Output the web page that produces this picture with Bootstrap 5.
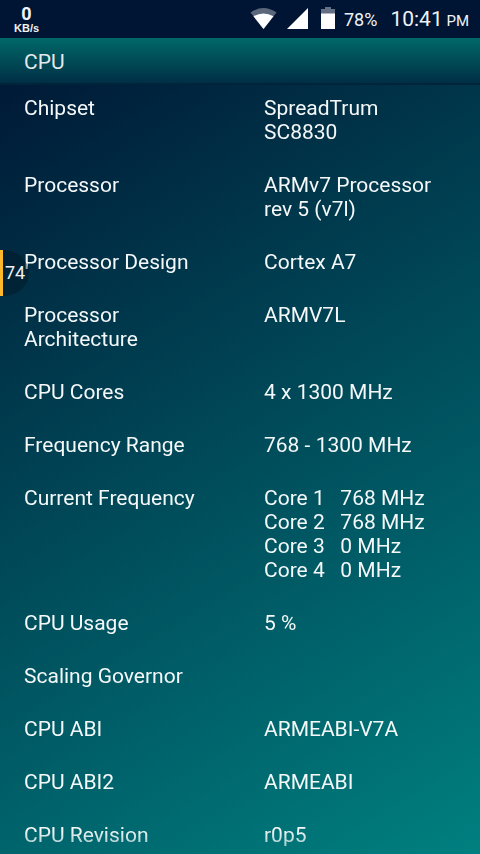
<!DOCTYPE html>
<html lang="en">
<head>
<meta charset="utf-8">
<meta name="viewport" content="width=device-width, initial-scale=1">
<title>CPU</title>
<link href="https://cdn.jsdelivr.net/npm/bootstrap@5.3.0/dist/css/bootstrap.min.css" rel="stylesheet">
<style>
body { font-family: Roboto, sans-serif; font-size: 21px; line-height: 24px; background: #001533; color: #f4f8f8; }
.status-bar { height: 38px; background: #001533; color: #f0f2f5; }
.net-speed { font-family: "Liberation Sans", sans-serif; font-weight: 700; font-size: 11px; line-height: 11px; margin-left: 14px; }
.net-value { font-family: Roboto, sans-serif; font-weight: 700; font-size: 18px; line-height: 19px; }
.battery-text { font-size: 18px; margin: 2px 13px 0 8px; }
.clock { font-size: 21px; margin-top: 2px; padding-right: 11px; }
.clock-half { font-size: 15px; }
.screen-body { background: linear-gradient(149deg, #001533, #008080); }
.title-bar { height: 47px; padding-top: 2px; background: linear-gradient(#006868, #002f45); border-bottom: 2px solid #00243a; color: #e3e9ea; font-size: 21px; line-height: 24px; }
.spec-list { padding-top: 11px; gap: 29px; -webkit-mask-image: linear-gradient(#000 calc(100% - 24px), rgba(0, 0, 0, .5)); mask-image: linear-gradient(#000 calc(100% - 24px), rgba(0, 0, 0, .5)); }
.spec-cell { padding: 0 28px 0 24px; font-weight: 400; }
.bubble { top: 250px; width: 29px; height: 46px; border-left: 3px solid #fdb82b; }
.bubble-disc { background: rgba(0, 20, 32, .4); border-radius: 0 26px 26px 0 / 0 23px 23px 0; color: #f0f2f5; font-size: 18px; padding-left: 2px; }
</style>
<script src="https://cdn.jsdelivr.net/npm/bootstrap@5.3.0/dist/js/bootstrap.bundle.min.js"></script>
</head>
<body>
<div class="d-flex flex-column vh-100 overflow-hidden position-relative">
  <header class="status-bar d-flex align-items-center flex-shrink-0">
    <div class="net-speed text-center"><div class="net-value">0</div>KB/s</div>
    <div class="d-flex align-items-center ms-auto">
      <svg width="86" height="38" viewBox="0 0 86 38" role="img" aria-label="Wi-Fi, mobile signal and battery">
        <path d="M0.500 12.500Q13.500 3.500 26.500 12.500L13.500 29Z" fill="#5c677b"/>
        <path d="M3.500 16.300Q13.500 10.500 23.500 16.300L13.500 29Z" fill="#fff"/>
        <path d="M37 29L58 8V29Z" fill="#fff"/>
        <path d="M71 9H75V7H81V9H85V14H71Z" fill="#667085"/>
        <path d="M71 13.500H85V29H71Z" fill="#fff"/>
      </svg>
      <span class="battery-text">78%</span>
      <span class="clock">10:41<span class="clock-half"> PM</span></span>
    </div>
  </header>
  <main class="screen-body d-flex flex-column flex-grow-1 overflow-hidden">
    <h1 class="title-bar d-flex align-items-center flex-shrink-0 fw-normal ps-4 mb-0">CPU</h1>
    <dl class="spec-list d-flex flex-column flex-grow-1 overflow-hidden mb-0">
      <div class="row g-0 flex-shrink-0"><dt class="spec-cell col-6">Chipset</dt><dd class="spec-cell col-6 mb-0">SpreadTrum SC8830</dd></div>
      <div class="row g-0 flex-shrink-0"><dt class="spec-cell col-6">Processor</dt><dd class="spec-cell col-6 mb-0">ARMv7 Processor rev 5 (v7l)</dd></div>
      <div class="row g-0 flex-shrink-0"><dt class="spec-cell col-6">Processor Design</dt><dd class="spec-cell col-6 mb-0">Cortex A7</dd></div>
      <div class="row g-0 flex-shrink-0"><dt class="spec-cell col-6">Processor Architecture</dt><dd class="spec-cell col-6 mb-0">ARMV7L</dd></div>
      <div class="row g-0 flex-shrink-0"><dt class="spec-cell col-6">CPU Cores</dt><dd class="spec-cell col-6 mb-0">4 x 1300 MHz</dd></div>
      <div class="row g-0 flex-shrink-0"><dt class="spec-cell col-6">Frequency Range</dt><dd class="spec-cell col-6 mb-0">768 - 1300 MHz</dd></div>
      <div class="row g-0 flex-shrink-0"><dt class="spec-cell col-6">Current Frequency</dt><dd class="spec-cell col-6 mb-0">Core 1 &nbsp; 768 MHz<br>Core 2 &nbsp; 768 MHz<br>Core 3 &nbsp; 0 MHz<br>Core 4 &nbsp; 0 MHz</dd></div>
      <div class="row g-0 flex-shrink-0"><dt class="spec-cell col-6">CPU Usage</dt><dd class="spec-cell col-6 mb-0">5 %</dd></div>
      <div class="row g-0 flex-shrink-0"><dt class="spec-cell col-6">Scaling Governor</dt><dd class="spec-cell col-6 mb-0"></dd></div>
      <div class="row g-0 flex-shrink-0"><dt class="spec-cell col-6">CPU ABI</dt><dd class="spec-cell col-6 mb-0">ARMEABI-V7A</dd></div>
      <div class="row g-0 flex-shrink-0"><dt class="spec-cell col-6">CPU ABI2</dt><dd class="spec-cell col-6 mb-0">ARMEABI</dd></div>
      <div class="row g-0 flex-shrink-0"><dt class="spec-cell col-6">CPU Revision</dt><dd class="spec-cell col-6 mb-0">r0p5</dd></div>
    </dl>
  </main>
  <div class="bubble position-absolute start-0"><div class="bubble-disc d-flex align-items-center h-100">74</div></div>
</div>
</body>
</html>
